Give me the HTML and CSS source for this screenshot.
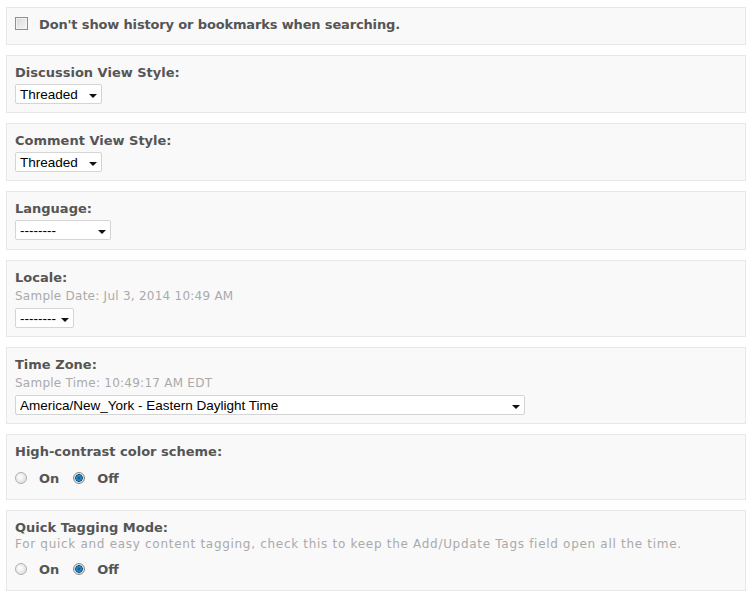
FILE: index.html
```html
<!DOCTYPE html>
<html lang="en">
<head>
    <meta charset="UTF-8">
    <title>Display Settings</title>
    <link rel="stylesheet" href="styles.css">
</head>
<body>
    <div class="settings">
        <div class="panel">
            <label class="check-row">
                <input type="checkbox" class="check"> <span class="check-text">Don't show history or bookmarks when searching.</span>
            </label>
        </div>

        <div class="panel">
            <div class="field-label">Discussion View Style:</div>
            <span class="select-wrap">
                <select class="drop w-threaded">
                    <option>Threaded</option>
                    <option>Flat</option>
                </select>
            </span>
        </div>

        <div class="panel">
            <div class="field-label">Comment View Style:</div>
            <span class="select-wrap">
                <select class="drop w-threaded">
                    <option>Threaded</option>
                    <option>Flat</option>
                </select>
            </span>
        </div>

        <div class="panel panel-tall">
            <div class="field-label">Language:</div>
            <span class="select-wrap">
                <select class="drop w-lang">
                    <option>--------</option>
                </select>
            </span>
        </div>

        <div class="panel">
            <div class="field-label">Locale:</div>
            <div class="hint">Sample Date: Jul 3, 2014 10:49 AM</div>
            <span class="select-wrap">
                <select class="drop w-locale">
                    <option>--------</option>
                </select>
            </span>
        </div>

        <div class="panel">
            <div class="field-label">Time Zone:</div>
            <div class="hint">Sample Time: 10:49:17 AM EDT</div>
            <span class="select-wrap">
                <select class="drop w-zone">
                    <option>America/New_York - Eastern Daylight Time</option>
                </select>
            </span>
        </div>

        <div class="panel">
            <div class="field-label">High-contrast color scheme:</div>
            <div class="radio-group">
                <label><input type="radio" name="contrast" class="radio"> On</label>
                <label><input type="radio" name="contrast" class="radio" checked> Off</label>
            </div>
        </div>

        <div class="panel">
            <div class="field-label">Quick Tagging Mode:</div>
            <div class="description">For quick and easy content tagging, check this to keep the Add/Update Tags field open all the time.</div>
            <div class="radio-group">
                <label><input type="radio" name="tagging" class="radio"> On</label>
                <label><input type="radio" name="tagging" class="radio" checked> Off</label>
            </div>
        </div>
    </div>
</body>
</html>
```

FILE: styles.css
```css
/* General Styles */
body {
    margin: 7px 10px 0 6px;
    font-family: "DejaVu Sans", Verdana, sans-serif;
    font-size: 13px;
    color: #555;
    background-color: #fff;
}

.panel {
    background-color: #f9f9f9;
    border: 1px solid #e7e7e7;
    padding: 8px;
    margin-bottom: 10px;
}

.panel-tall {
    padding-bottom: 9px;
}

.field-label {
    font-weight: bold;
    line-height: 18px;
}

.hint {
    font-size: 12px;
    letter-spacing: 0.25px;
    color: #aaa;
    line-height: 19px;
}

.description {
    font-size: 12px;
    letter-spacing: 0.7px;
    color: #aaa;
    line-height: 15px;
}

/* Checkbox row */
.check-row {
    display: flex;
    align-items: flex-start;
    gap: 11px;
    height: 20px;
    line-height: 17px;
    font-weight: bold;
}

.check-text {
    letter-spacing: -0.15px;
}

.check {
    appearance: none;
    -webkit-appearance: none;
    flex: none;
    width: 13px;
    height: 13px;
    margin: 1px 0 0 0;
    border: 1px solid #8f8f8f;
    background: linear-gradient(135deg, #d8d8d8, #f6f6f6);
    box-shadow: inset 0 0 0 1px #f2f2f2;
}

/* Dropdowns */
.select-wrap {
    position: relative;
    display: inline-block;
    margin-top: 2px;
}

.select-wrap::after {
    content: '';
    position: absolute;
    right: 5px;
    top: 10px;
    border-left: 4px solid transparent;
    border-right: 4px solid transparent;
    border-top: 4px solid #111;
    pointer-events: none;
}

.drop {
    appearance: none;
    -webkit-appearance: none;
    display: block;
    height: 20px;
    margin: 0;
    padding: 0 0 0 4px;
    font-family: "Liberation Sans", Arial, sans-serif;
    font-size: 13.5px;
    color: #000;
    background-color: #fff;
    border: 1px solid #d4d4d4;
    border-radius: 2px;
}

.w-threaded { width: 87px; }
.w-lang { width: 96px; }
.w-locale { width: 59px; }
.w-zone { width: 510px; }

/* Radio buttons */
.radio-group {
    display: flex;
    align-items: flex-start;
    gap: 14px;
    height: 30px;
    box-sizing: border-box;
    padding-top: 10px;
    line-height: 16px;
    font-weight: bold;
}

.radio-group label {
    display: flex;
    align-items: flex-start;
    gap: 12px;
}

.radio {
    appearance: none;
    -webkit-appearance: none;
    flex: none;
    width: 12px;
    height: 12px;
    margin: 1px 0 0 0;
    border: 1px solid #b0b0b0;
    border-radius: 50%;
    background: radial-gradient(circle at 40% 40%, #fff, #d6d6d6);
}

.radio:checked {
    border-color: #8a8a8a;
    background: radial-gradient(circle, #0b4f7c 0, #2a8fd0 2.5px, #0d4a73 3.5px, #c8d4dc 4px, #f2f2f2 5.5px);
}
```
